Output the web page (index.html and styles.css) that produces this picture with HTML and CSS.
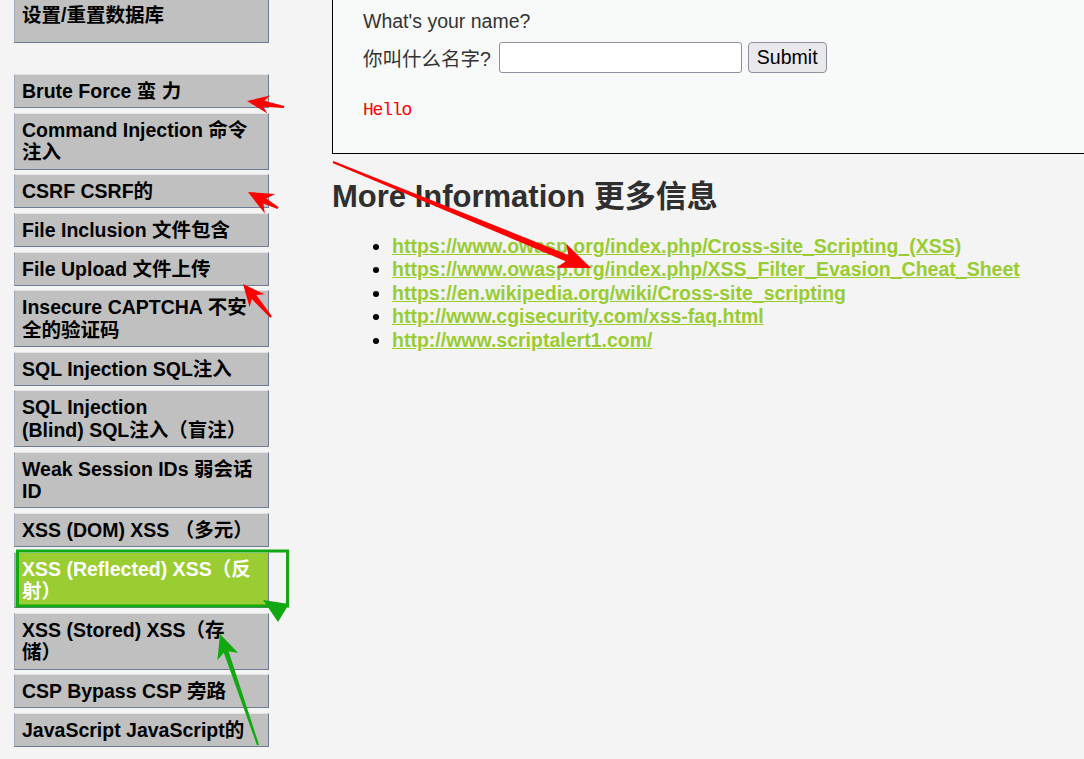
FILE: index.html
```html
<!DOCTYPE html>
<html lang="zh-CN">
<head>
<meta charset="utf-8">
<title>XSS (Reflected)</title>
<link rel="stylesheet" href="styles.css">
</head>
<body>
<div class="page">
  <nav class="menu">
    <ul class="menu-group first">
      <li><a class="menu-item setup">设置/重置数据库</a></li>
    </ul>
    <ul class="menu-group">
      <li><a class="menu-item">Brute Force 蛮 力</a></li>
      <li><a class="menu-item">Command Injection 命令<br>注入</a></li>
      <li><a class="menu-item">CSRF CSRF的</a></li>
      <li><a class="menu-item">File Inclusion 文件包含</a></li>
      <li><a class="menu-item">File Upload 文件上传</a></li>
      <li><a class="menu-item">Insecure CAPTCHA 不安<br>全的验证码</a></li>
      <li><a class="menu-item">SQL Injection SQL注入</a></li>
      <li><a class="menu-item">SQL Injection<br>(Blind) SQL注入（盲注）</a></li>
      <li><a class="menu-item">Weak Session IDs 弱会话<br>ID</a></li>
      <li><a class="menu-item">XSS (DOM) XSS （多元）</a></li>
      <li><a class="menu-item selected">XSS (Reflected) XSS（反<br>射）</a></li>
      <li><a class="menu-item">XSS (Stored) XSS（存<br>储）</a></li>
      <li><a class="menu-item">CSP Bypass CSP 旁路</a></li>
      <li><a class="menu-item">JavaScript JavaScript的</a></li>
    </ul>
  </nav>
  <main class="content">
    <div class="vuln-box">
      <p class="question">What's your name?</p>
      <form class="name-form">
        <label class="name-label">你叫什么名字?</label>
        <input class="name-input" type="text">
        <button class="submit-btn" type="button">Submit</button>
      </form>
      <pre class="hello">Hello</pre>
    </div>
    <h2 class="more-title">More Information 更多信息</h2>
    <ul class="links">
      <li><a>https://www.owasp.org/index.php/Cross-site_Scripting_(XSS)</a></li>
      <li><a>https://www.owasp.org/index.php/XSS_Filter_Evasion_Cheat_Sheet</a></li>
      <li><a>https://en.wikipedia.org/wiki/Cross-site_scripting</a></li>
      <li><a>http://www.cgisecurity.com/xss-faq.html</a></li>
      <li><a>http://www.scriptalert1.com/</a></li>
    </ul>
  </main>
</div>
<svg class="annotations" width="1084" height="759" viewBox="0 0 1084 759">
  <g class="red">
    <polygon points="284.2,106 264.3,100.7 270.1,95.6 247,101 267.3,113.4 263.3,106.7 283.8,108"/>
    <polygon points="278.5,207.1 266.2,198.4 275.2,194.1 248,192 264.8,213.5 263.4,203.6 277.5,208.9"/>
    <polygon points="271.9,316.2 256.3,295.1 264.8,294.3 243,284 249.6,307.3 251.7,298.9 270.1,317.8"/>
    <polygon points="333.4,161.1 568.3,254.9 566.3,243.8 591,268 556.5,267.8 565.7,261.3 332.6,162.9"/>
  </g>
  <g class="green">
    <rect class="green-frame" x="17.5" y="551" width="270" height="55"/>
    <polygon points="263,600 289,604 278,622"/>
    <polygon points="259,744.7 228.6,651.2 238.2,653.1 220,634 217.4,660.3 223.8,652.8 257,745.3"/>
  </g>
</svg>
</body>
</html>
```

FILE: styles.css
```css
html, body {
  margin: 0;
  padding: 0;
  background: #f4f4f4;
  overflow: hidden;
}

body {
  position: relative;
  width: 1084px;
  height: 759px;
  font-family: "Liberation Sans", "Noto Sans CJK SC", Arial, sans-serif;
  color: #333;
}

.page {
  display: flex;
  gap: 63px;
  padding-left: 14px;
}

.menu {
  width: 255px;
  flex: none;
}

.menu-group {
  list-style: none;
  margin: 0;
  padding: 0;
}

.menu-group.first {
  margin-bottom: 31px;
}

.menu-item {
  display: block;
  font-weight: bold;
  font-size: 19.5px;
  line-height: 22.4px;
  color: #000;
  background: #c0c0c0;
  border-top: 1px solid #e4e4e4;
  border-left: 1px solid #a3abb8;
  border-right: 1px solid #6e7b93;
  border-bottom: 1px solid #6e7b93;
  padding: 5px 8px 5px 7px;
  margin-bottom: 4.4px;
  white-space: nowrap;
}

.menu-item.setup {
  border-top: none;
  padding-top: 4px;
  padding-bottom: 15.6px;
}

.menu-item.selected {
  background: #9acd32;
  color: #fff;
}

.content {
  flex: 1;
  min-width: 0;
}

.vuln-box {
  background: #f8f9f9;
  border-left: 1px solid #000;
  border-bottom: 1px solid #000;
  padding: 10px 0 31px 30px;
  font-size: 19.5px;
}

.question {
  margin: 0;
  line-height: 22.5px;
  color: #333;
}

.name-form {
  display: flex;
  align-items: center;
  margin-top: 9px;
  height: 31px;
}

.name-label {
  color: #333;
  margin-right: 8px;
}

.name-input {
  width: 243px;
  height: 31px;
  box-sizing: border-box;
  border: 1px solid #8f8f9d;
  border-radius: 3px;
  background: #fff;
  margin: 0 6px 0 0;
  padding: 0;
}

.submit-btn {
  height: 31px;
  box-sizing: border-box;
  padding: 0 8px;
  font-family: "Liberation Sans", Arial, sans-serif;
  font-size: 19.5px;
  color: #000;
  background: #e9e9ed;
  border: 1px solid #8f8f9d;
  border-radius: 4px;
}

.hello {
  margin: 25px 0 0;
  font-family: "Liberation Mono", "DejaVu Sans Mono", monospace;
  font-size: 18px;
  line-height: 24px;
  letter-spacing: -1.2px;
  color: #f00;
}

.more-title {
  margin: 25px 0 0;
  font-size: 31px;
  line-height: 36px;
  font-weight: bold;
  color: #2f2f2f;
}

.links {
  margin: 20px 0 0;
  padding-left: 60px;
  font-size: 19.5px;
  line-height: 23.5px;
  color: #000;
}

.links a {
  color: #99cc33;
  font-weight: bold;
  text-decoration: underline;
}

.annotations {
  position: absolute;
  top: 0;
  left: 0;
  pointer-events: none;
}

.red polygon {
  fill: #ff0000;
}

.green polygon {
  fill: #12a812;
}

.green-frame {
  fill: none;
  stroke: #12a812;
  stroke-width: 3;
}
```
